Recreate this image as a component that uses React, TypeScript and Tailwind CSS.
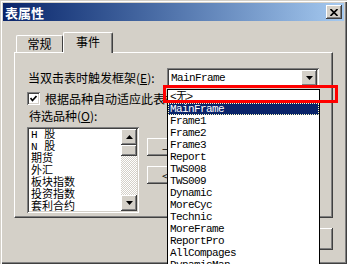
import React from "react";

const cjk = "font-['Noto_Sans_CJK_SC',sans-serif]";
const mono = "font-['Liberation_Mono','Noto_Sans_CJK_SC',monospace]";

const raised =
  "bg-[#d4d0c8] shadow-[inset_-1px_-1px_0_#404040,inset_1px_1px_0_#ffffff,inset_-2px_-2px_0_#808080,inset_2px_2px_0_#d4d0c8]";
const sunken =
  "bg-white shadow-[inset_1px_1px_0_#808080,inset_-1px_-1px_0_#ffffff,inset_2px_2px_0_#404040,inset_-2px_-2px_0_#d4d0c8]";

const frames = [
  "MainFrame",
  "Frame1",
  "Frame2",
  "Frame3",
  "Report",
  "TWS008",
  "TWS009",
  "Dynamic",
  "MoreCyc",
  "Technic",
  "MoreFrame",
  "ReportPro",
  "AllCompages",
  "DynamicMan",
];

const kinds = ["H 股", "N 股", "期货", "外汇", "板块指数", "投资指数", "套利合约"];

function Arrow({ up }: { up?: boolean }) {
  return (
    <svg width="7" height="4" viewBox="0 0 7 4">
      <path d={up ? "M3.5 0 L7 4 L0 4 Z" : "M0 0 L7 0 L3.5 4 Z"} fill="#000" />
    </svg>
  );
}

export default function App() {
  return (
    <div className={`relative w-[347px] h-[264px] overflow-hidden bg-[#d4d0c8] p-[3px] shadow-[inset_1px_1px_0_#d4d0c8,inset_2px_2px_0_#ffffff,inset_-1px_-1px_0_#404040,inset_-2px_-2px_0_#808080] ${cjk} text-black`}>
      {/* Title bar */}
      <div className="flex h-[18px] items-center justify-between bg-linear-to-r from-[#0a246a] to-[#a6caf0] pl-[2px] pr-[2px]">
        <span className="text-[13px] font-bold leading-none text-white">表属性</span>
        <div className={`flex h-[14px] w-[16px] items-center justify-center ${raised}`}>
          <svg width="8" height="7" viewBox="0 0 8 7">
            <path d="M0.5 0 L7.5 7 M7.5 0 L0.5 7" stroke="#000" strokeWidth="1.6" />
          </svg>
        </div>
      </div>

      {/* Tabs */}
      <div className="ml-[11px] mt-[10px]">
        <div className="flex h-[21px] items-end pl-[2px]">
          <div className="flex h-[17px] w-[47px] items-center justify-center rounded-t-[2px] border-l border-t border-r border-l-white border-t-white border-r-[#404040] text-[12px] leading-none">
            常规
          </div>
          <div className="relative top-[1px] z-10 flex h-[21px] w-[50px] items-start justify-center rounded-t-[2px] border-l border-t border-r border-l-white border-t-white border-r-[#404040] bg-[#d4d0c8] pt-[3px] text-[12px] leading-none shadow-[inset_-1px_0_0_#808080]">
            事件
          </div>
        </div>

        {/* Panel */}
        <div className="h-[166px] w-[319px] border border-t-white border-l-white border-r-[#404040] border-b-[#404040] pl-[12px] pt-[15px] shadow-[inset_-1px_-1px_0_#808080]">
          <div className="flex h-[20px] items-center">
            <span className="w-[140px] pl-[1px] text-[12px] leading-[14px]">
              当双击表时触发框架(<span className="underline">E</span>):
            </span>
            <div className={`flex h-[20px] w-[152px] items-center justify-between pl-[4px] pr-[2px] ${sunken}`}>
              <span className={`${mono} text-[11px] tracking-[-0.6px]`}>MainFrame</span>
              <div className={`flex h-[16px] w-[16px] items-center justify-center ${raised}`}>
                <Arrow />
              </div>
            </div>
          </div>

          <div className="mt-[4px] flex h-[13px] items-center gap-[5px]">
            <div className={`flex h-[13px] w-[13px] items-center justify-center ${sunken}`}>
              <svg width="7" height="7" viewBox="0 0 7 7">
                <path d="M0.5 3 L2.5 5.5 L6.5 1" stroke="#000" strokeWidth="1.7" fill="none" />
              </svg>
            </div>
            <span className="whitespace-nowrap text-[12px] leading-none">根据品种自动适应此表框架</span>
          </div>

          <div className="mt-[4px] h-[14px] pl-[2px] text-[12px] leading-[14px]">
            待选品种(<span className="underline">O</span>):
          </div>

          <div className="mt-[4px] flex items-start">
            <div className={`flex h-[86px] w-[112px] p-[2px] ${sunken}`}>
              <div className="flex-1 overflow-hidden pl-[2px]">
                {kinds.map((k) => (
                  <div key={k} className={`${mono} h-[12px] text-[11px] leading-[12px] whitespace-nowrap`}>
                    {k}
                  </div>
                ))}
              </div>
              <div className="flex w-[16px] flex-col">
                <div className={`flex h-[16px] items-center justify-center ${raised}`}>
                  <Arrow up />
                </div>
                <div className={`h-[11px] ${raised}`} />
                <div className="flex-1 bg-[repeating-conic-gradient(#ffffff_0_25%,#d4d0c8_0_50%)] bg-[length:2px_2px]" />
                <div className={`flex h-[16px] items-center justify-center ${raised}`}>
                  <Arrow />
                </div>
              </div>
            </div>
            <div className="ml-[8px] flex flex-col gap-[10px] pt-[11px]">
              <div className={`flex h-[18px] w-[60px] items-center pl-[15px] text-[10px] ${raised}`}>—</div>
              <div className={`flex h-[18px] w-[60px] items-center pl-[15px] text-[10px] ${raised}`}>&lt;</div>
            </div>
          </div>
        </div>

        {/* Dialog buttons */}
        <div className="mt-[10px] flex w-[319px] justify-end">
          <div className={`h-[22px] w-[75px] ${raised}`} />
        </div>
      </div>

      {/* Dropdown popup */}
      <div className={`absolute left-[167px] top-[89px] h-[190px] w-[153px] border border-black bg-white pt-[1px] ${mono} text-[11px]`}>
        <div className="h-[12px] px-[2px] leading-[12px] tracking-[-0.6px]">&lt;无&gt;</div>
        {frames.map((f, i) => (
          <div
            key={f}
            className={`h-[12px] px-[2px] leading-[12px] tracking-[-0.6px] ${
              i === 0 ? "bg-[#0a246a] text-white outline-1 outline-dotted outline-[#ffffc0] -outline-offset-1" : ""
            }`}
          >
            {f}
          </div>
        ))}
      </div>

      {/* Red highlight */}
      <div className="absolute left-[163px] top-[85px] h-[18px] w-[175px] border-[3px] border-[#ff0000]" />
    </div>
  );
}
